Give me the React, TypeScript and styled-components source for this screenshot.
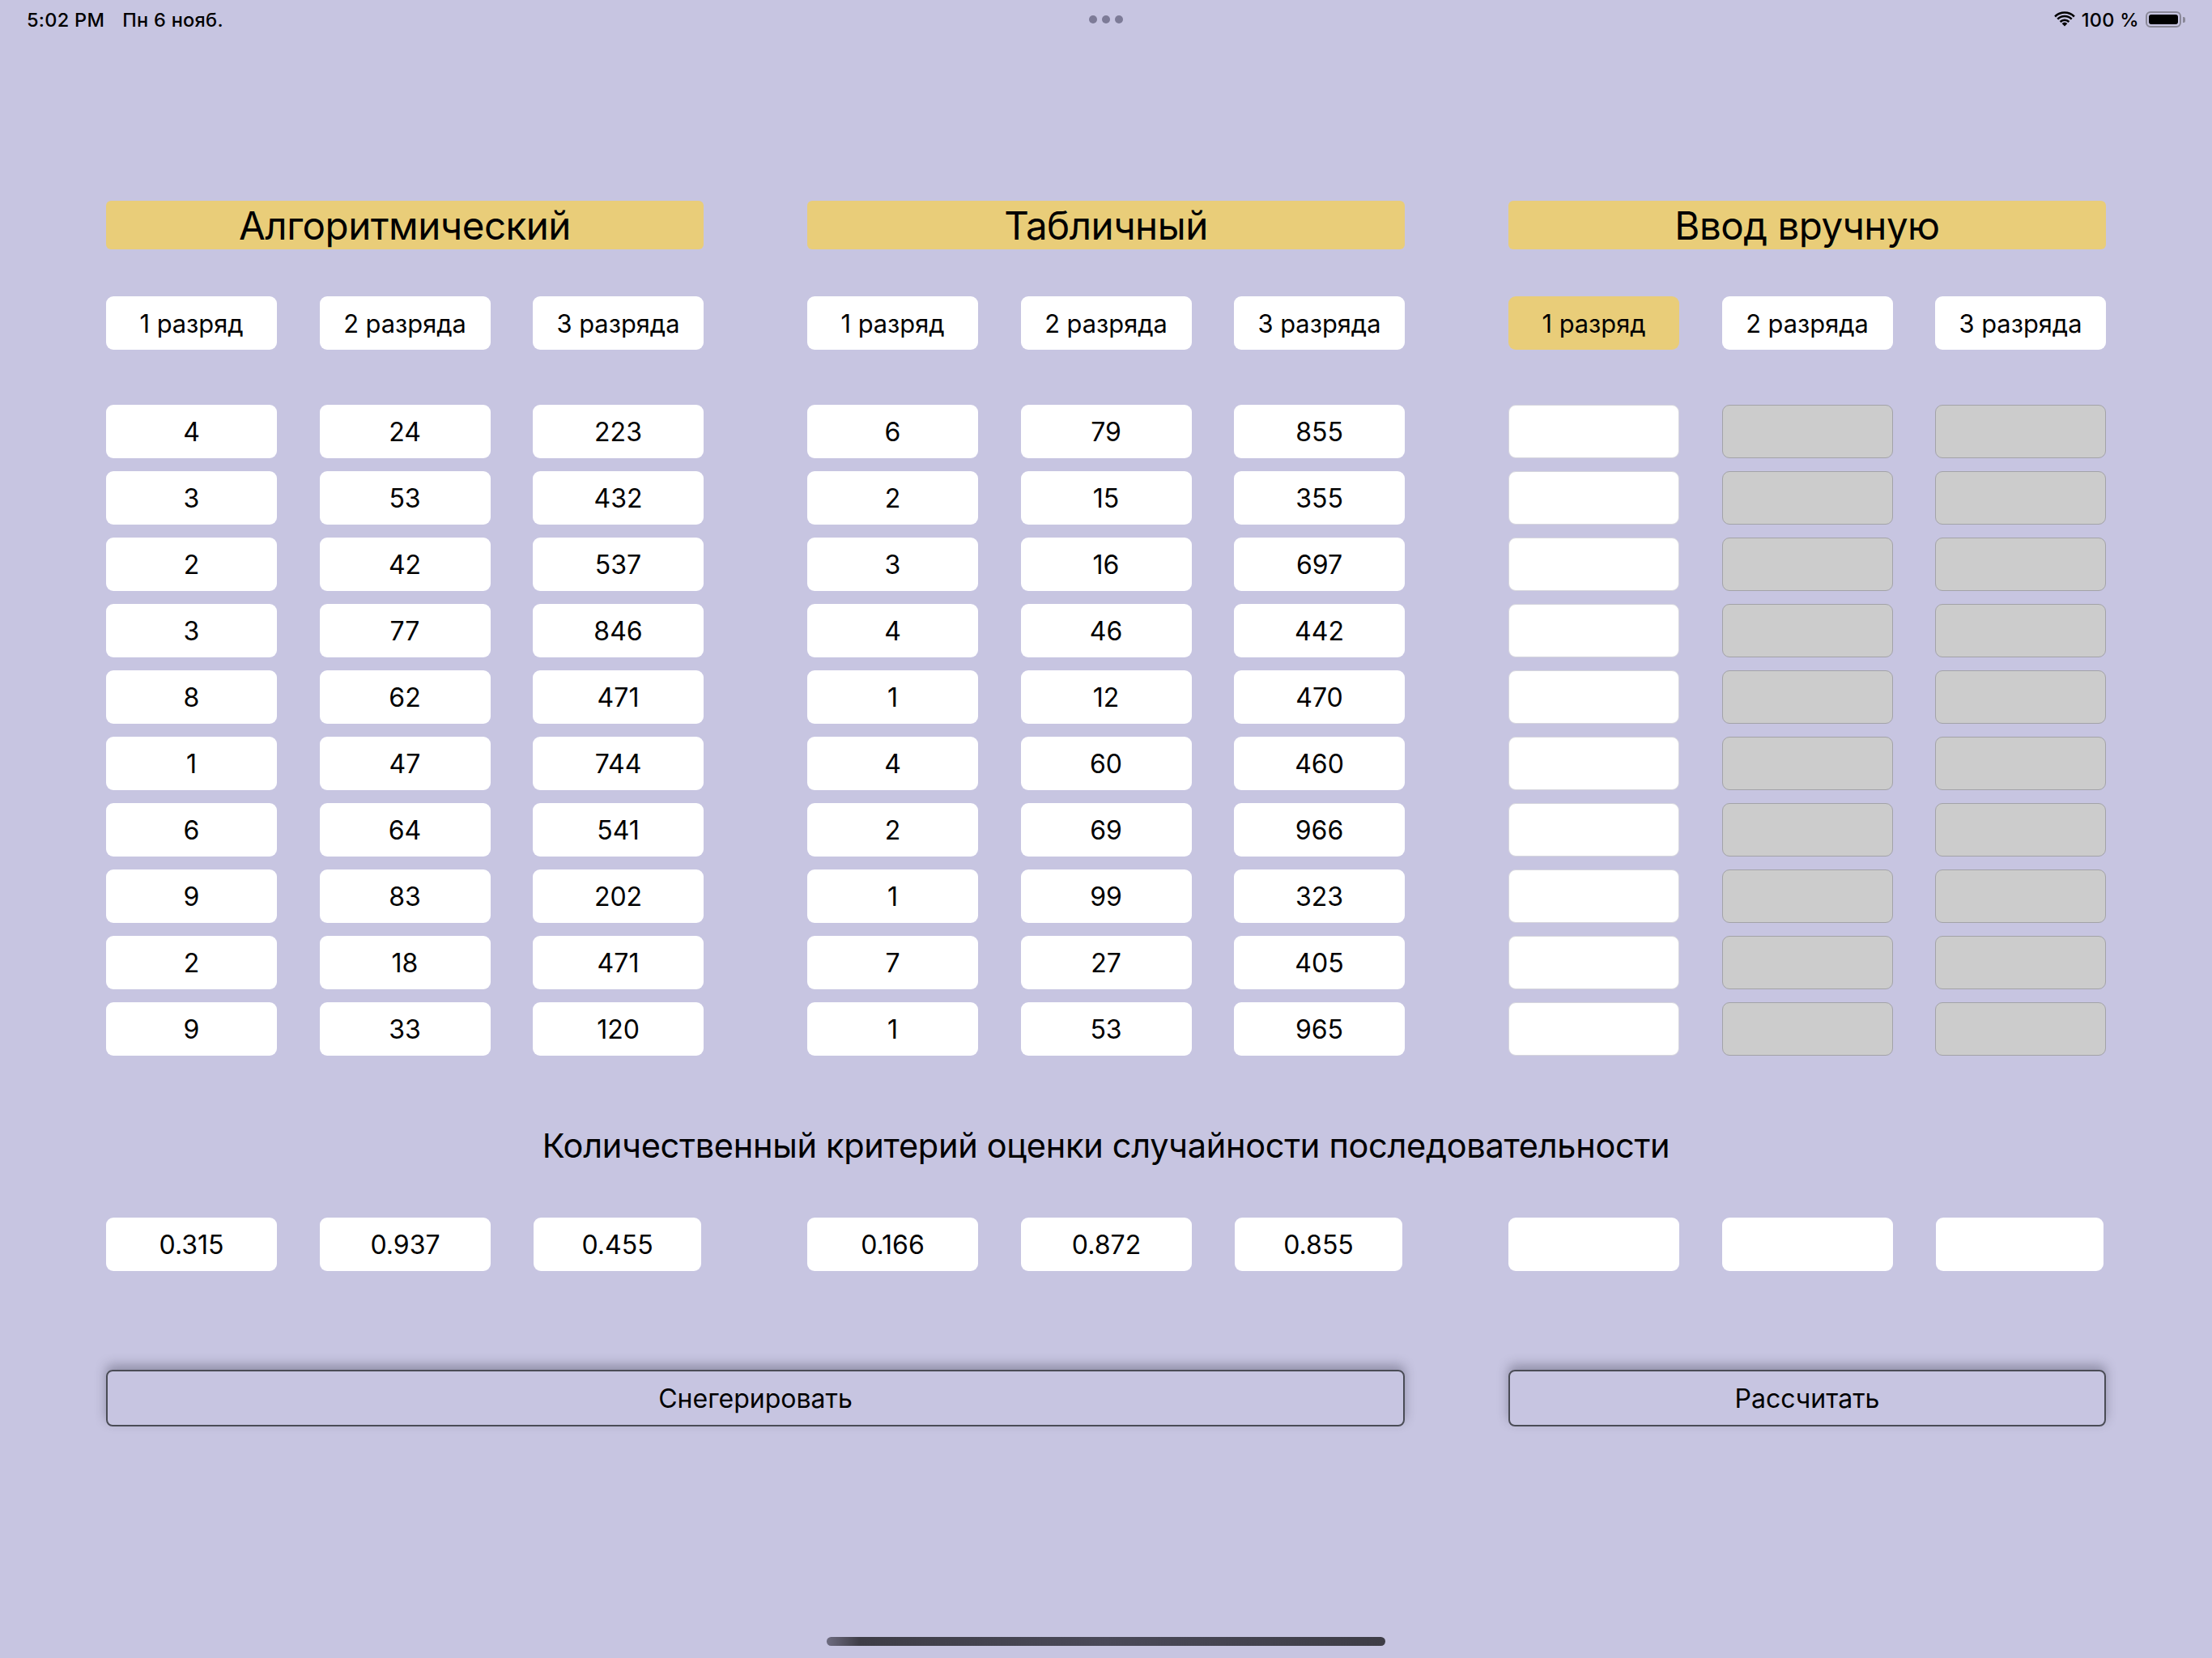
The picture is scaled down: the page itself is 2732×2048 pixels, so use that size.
import React from "react";
import styled, { createGlobalStyle } from "styled-components";

const GlobalStyle = createGlobalStyle`
  html, body {
    margin: 0;
    padding: 0;
    background: #c7c5e1;
  }
  body {
    font-family: Inter, "Noto Sans", sans-serif;
    color: #000;
  }
`;

const Screen = styled.div`
  width: 2732px;
  height: 2048px;
  background: #c7c5e1;
  display: flex;
  flex-direction: column;
  overflow: hidden;
`;

const StatusBar = styled.div`
  height: 48px;
  display: grid;
  grid-template-columns: 1fr auto 1fr;
  align-items: center;
  padding: 0 33px 0 33px;
  font-size: 23.5px;
  font-weight: 500;
  letter-spacing: 0.3px;
`;

const StatusLeft = styled.div`
  display: flex;
  gap: 22px;
`;

const Dots = styled.div`
  display: flex;
  gap: 6px;
`;

const Dot = styled.span`
  width: 10px;
  height: 10px;
  border-radius: 50%;
  background: #7d7b97;
`;

const StatusRight = styled.div`
  display: flex;
  justify-content: flex-end;
  align-items: center;
  gap: 8px;
`;

const Battery = styled.div`
  display: flex;
  align-items: center;
  gap: 2px;
`;

const BatteryBody = styled.div`
  width: 44px;
  height: 20px;
  border: 2px solid #8a8898;
  border-radius: 6px;
  padding: 2px;
  box-sizing: border-box;
  display: flex;
`;

const BatteryFill = styled.div`
  flex: 1;
  background: #000;
  border-radius: 3px;
`;

const BatteryCap = styled.div`
  width: 3px;
  height: 7px;
  background: #8a8898;
  border-radius: 0 2px 2px 0;
`;

const Main = styled.div`
  display: grid;
  grid-template-columns: repeat(3, 738px);
  column-gap: 128px;
  padding: 200px 131px 0;
`;

const Panel = styled.div`
  display: flex;
  flex-direction: column;
`;

const Header = styled.div`
  height: 60px;
  background: #e9cd79;
  border-radius: 6px;
  display: flex;
  align-items: center;
  justify-content: center;
  font-size: 47.5px;
  letter-spacing: -0.5px;
`;

const Triple = styled.div<{ $mt?: number }>`
  display: grid;
  grid-template-columns: repeat(3, 211px);
  justify-content: space-between;
  margin-top: ${(p) => p.$mt ?? 0}px;
`;

const Rows = styled.div`
  display: flex;
  flex-direction: column;
  gap: 16px;
  margin-top: 68px;
`;

const Cell = styled.div<{ $variant?: "white" | "gold" | "input" | "disabled"; $label?: boolean }>`
  height: 66px;
  box-sizing: border-box;
  border-radius: 9px;
  display: flex;
  align-items: center;
  justify-content: center;
  font-size: ${(p) => (p.$label ? 30.8 : 32)}px;
  background: ${(p) =>
    p.$variant === "gold"
      ? "#e9cd79"
      : p.$variant === "disabled"
      ? "#cccccc"
      : "#ffffff"};
  border: ${(p) =>
    p.$variant === "disabled"
      ? "1.5px solid #a3a3a8"
      : p.$variant === "input"
      ? "1px solid #d6d6de"
      : "none"};
`;

const Title = styled.div`
  grid-column: 1 / -1;
  text-align: center;
  font-size: 41.5px;
  letter-spacing: -0.3px;
  margin-top: 86px;
  line-height: 50px;
`;

const Values = styled.div`
  display: grid;
  grid-template-columns: 211px 211px 207px;
  column-gap: 53px;
  margin-top: 64px;
`;

const ActionButton = styled.button<{ $span?: number }>`
  grid-column: span ${(p) => p.$span ?? 1};
  margin-top: 122px;
  height: 70px;
  background: transparent;
  border: 2px solid #4a4c56;
  border-radius: 8px;
  box-shadow: 0 -6px 14px rgba(40, 40, 60, 0.35);
  font-family: Inter, "Noto Sans", sans-serif;
  font-size: 32px;
  color: #000;
  padding: 0;
`;

const HomeBar = styled.div`
  margin: auto auto 15px;
  width: 690px;
  height: 11px;
  border-radius: 6px;
  background: linear-gradient(90deg, #6e6c80 0%, #3e3d46 6%, #4a4958 50%, #3e3d46 100%);
`;

const algo = [
  ["4", "24", "223"],
  ["3", "53", "432"],
  ["2", "42", "537"],
  ["3", "77", "846"],
  ["8", "62", "471"],
  ["1", "47", "744"],
  ["6", "64", "541"],
  ["9", "83", "202"],
  ["2", "18", "471"],
  ["9", "33", "120"],
];

const table = [
  ["6", "79", "855"],
  ["2", "15", "355"],
  ["3", "16", "697"],
  ["4", "46", "442"],
  ["1", "12", "470"],
  ["4", "60", "460"],
  ["2", "69", "966"],
  ["1", "99", "323"],
  ["7", "27", "405"],
  ["1", "53", "965"],
];

const labels = ["1 разряд", "2 разряда", "3 разряда"];

const Wifi = () => (
  <svg width="26" height="20" viewBox="0 0 26 20">
    <path d="M13 18.5 L9.6 15 A5 5 0 0 1 16.4 15 Z" fill="#000" />
    <path d="M6.7 12 A9 9 0 0 1 19.3 12 L17.5 13.9 A6.4 6.4 0 0 0 8.5 13.9 Z" fill="#000" />
    <path d="M3.4 8.7 A13.6 13.6 0 0 1 22.6 8.7 L20.8 10.6 A11 11 0 0 0 5.2 10.6 Z" fill="#000" />
    <path d="M0.2 5.5 A18 18 0 0 1 25.8 5.5 L24 7.4 A15.4 15.4 0 0 0 2 7.4 Z" fill="#000" />
  </svg>
);

type PanelProps = {
  title: string;
  data?: string[][];
  manual?: boolean;
};

const DataPanel = ({ title, data, manual }: PanelProps) => (
  <Panel>
    <Header>{title}</Header>
    <Triple $mt={58}>
      {labels.map((l, i) => (
        <Cell key={l} $label $variant={manual && i === 0 ? "gold" : "white"}>
          {l}
        </Cell>
      ))}
    </Triple>
    <Rows>
      {Array.from({ length: 10 }).map((_, r) => (
        <Triple key={r}>
          {[0, 1, 2].map((c) =>
            manual ? (
              <Cell key={c} $variant={c === 0 ? "input" : "disabled"} />
            ) : (
              <Cell key={c}>{data ? data[r][c] : ""}</Cell>
            )
          )}
        </Triple>
      ))}
    </Rows>
  </Panel>
);

const valueSets = [
  ["0.315", "0.937", "0.455"],
  ["0.166", "0.872", "0.855"],
  ["", "", ""],
];

export default function App() {
  return (
    <Screen>
      <GlobalStyle />
      <StatusBar>
        <StatusLeft>
          <span>5:02 PM</span>
          <span>Пн 6 нояб.</span>
        </StatusLeft>
        <Dots>
          <Dot />
          <Dot />
          <Dot />
        </Dots>
        <StatusRight>
          <Wifi />
          <span>100 %</span>
          <Battery>
            <BatteryBody>
              <BatteryFill />
            </BatteryBody>
            <BatteryCap />
          </Battery>
        </StatusRight>
      </StatusBar>
      <Main>
        <DataPanel title="Алгоритмический" data={algo} />
        <DataPanel title="Табличный" data={table} />
        <DataPanel title="Ввод вручную" manual />
        <Title>Количественный критерий оценки случайности последовательности</Title>
        {valueSets.map((set, i) => (
          <Values key={i}>
            {set.map((v, j) => (
              <Cell key={j}>{v}</Cell>
            ))}
          </Values>
        ))}
        <ActionButton $span={2}>Снегерировать</ActionButton>
        <ActionButton>Рассчитать</ActionButton>
      </Main>
      <HomeBar />
    </Screen>
  );
}
